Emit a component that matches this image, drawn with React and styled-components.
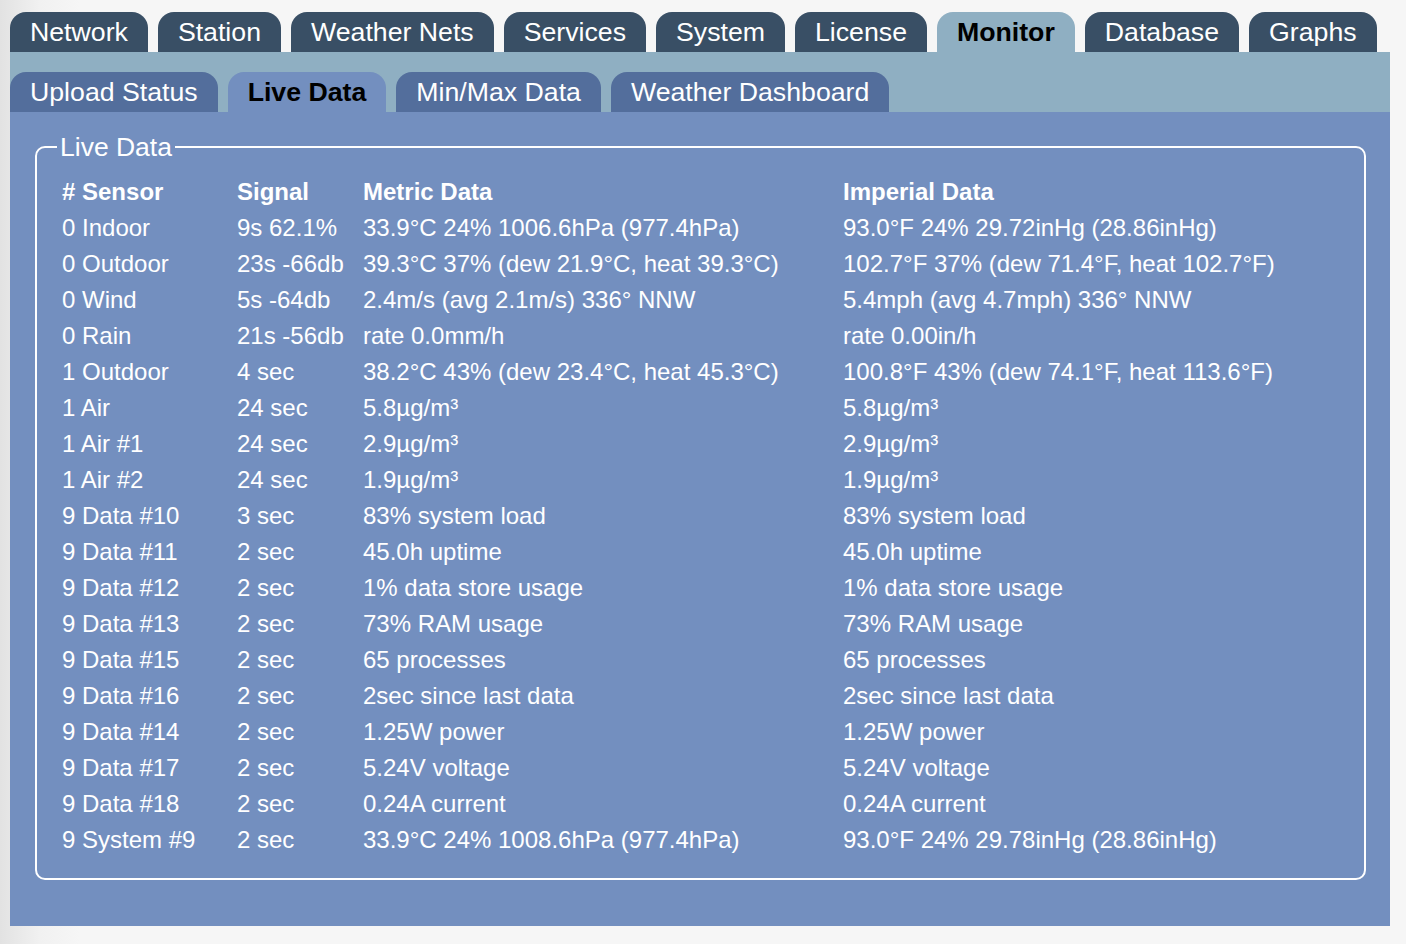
import React from "react";
import styled, { createGlobalStyle } from "styled-components";

const Global = createGlobalStyle`
  html, body { margin: 0; padding: 0; }
  body {
    background: linear-gradient(to right, #e2e2e2 0px, #f1f1f1 40px, #f6f6f6 80px);
    font-family: "Liberation Sans", Arial, sans-serif;
    min-height: 944px;
  }
`;

const Page = styled.div`
  padding: 12px 16px 18px 10px;
  width: 1380px;
`;

const TabBar = styled.div`
  display: flex;
  gap: 10px;
  height: 40px;
  align-items: flex-end;
`;

const Tab = styled.div`
  height: 40px;
  line-height: 40px;
  padding: 0 20px;
  border-radius: 16px 16px 0 0;
  font-size: 26.7px;
  white-space: nowrap;
  background: ${(p) => (p.$active ? "#8fafc2" : "#394f65")};
  color: ${(p) => (p.$active ? "#000" : "#fff")};
  font-weight: ${(p) => (p.$active ? "bold" : "normal")};
`;

const SubBar = styled.div`
  background: #8fafc2;
  padding-top: 20px;
  display: flex;
  gap: 10px;
  height: 40px;
`;

const SubTab = styled(Tab)`
  background: ${(p) => (p.$active ? "#738fbf" : "#536e9c")};
`;

const Content = styled.div`
  background: #738fbf;
  padding: 20px 24px 46px 25px;
  height: 748px;
`;

const Fieldset = styled.fieldset`
  margin: 0;
  border: 2px solid #fff;
  border-radius: 10px;
  padding: 0 0 16px 25px;
  height: 100%;
  box-sizing: border-box;
`;

const Legend = styled.legend`
  color: #fff;
  font-size: 26.5px;
  padding: 0 3px;
  margin-left: -5px;
  line-height: 30px;
`;

const Table = styled.table`
  border-collapse: collapse;
  color: #fff;
  font-size: 24px;
  margin-top: 12px;
`;

const Th = styled.th`
  text-align: left;
  font-weight: bold;
  height: 36px;
  padding: 0;
  width: ${(p) => p.$w}px;
`;

const Td = styled.td`
  height: 36px;
  padding: 0;
  white-space: nowrap;
`;

const topTabs = ["Network", "Station", "Weather Nets", "Services", "System", "License", "Monitor", "Database", "Graphs"];
const subTabs = ["Upload Status", "Live Data", "Min/Max Data", "Weather Dashboard"];

const rows = [
  ["0 Indoor", "9s 62.1%", "33.9°C 24% 1006.6hPa (977.4hPa)", "93.0°F 24% 29.72inHg (28.86inHg)"],
  ["0 Outdoor", "23s -66db", "39.3°C 37% (dew 21.9°C, heat 39.3°C)", "102.7°F 37% (dew 71.4°F, heat 102.7°F)"],
  ["0 Wind", "5s -64db", "2.4m/s (avg 2.1m/s) 336° NNW", "5.4mph (avg 4.7mph) 336° NNW"],
  ["0 Rain", "21s -56db", "rate 0.0mm/h", "rate 0.00in/h"],
  ["1 Outdoor", "4 sec", "38.2°C 43% (dew 23.4°C, heat 45.3°C)", "100.8°F 43% (dew 74.1°F, heat 113.6°F)"],
  ["1 Air", "24 sec", "5.8µg/m³", "5.8µg/m³"],
  ["1 Air #1", "24 sec", "2.9µg/m³", "2.9µg/m³"],
  ["1 Air #2", "24 sec", "1.9µg/m³", "1.9µg/m³"],
  ["9 Data #10", "3 sec", "83% system load", "83% system load"],
  ["9 Data #11", "2 sec", "45.0h uptime", "45.0h uptime"],
  ["9 Data #12", "2 sec", "1% data store usage", "1% data store usage"],
  ["9 Data #13", "2 sec", "73% RAM usage", "73% RAM usage"],
  ["9 Data #15", "2 sec", "65 processes", "65 processes"],
  ["9 Data #16", "2 sec", "2sec since last data", "2sec since last data"],
  ["9 Data #14", "2 sec", "1.25W power", "1.25W power"],
  ["9 Data #17", "2 sec", "5.24V voltage", "5.24V voltage"],
  ["9 Data #18", "2 sec", "0.24A current", "0.24A current"],
  ["9 System #9", "2 sec", "33.9°C 24% 1008.6hPa (977.4hPa)", "93.0°F 24% 29.78inHg (28.86inHg)"],
];

export default function App() {
  return (
    <>
      <Global />
      <Page>
        <TabBar>
          {topTabs.map((t) => (
            <Tab key={t} $active={t === "Monitor"}>{t}</Tab>
          ))}
        </TabBar>
        <SubBar>
          {subTabs.map((t) => (
            <SubTab key={t} $active={t === "Live Data"}>{t}</SubTab>
          ))}
        </SubBar>
        <Content>
          <Fieldset>
            <Legend>Live Data</Legend>
            <Table>
              <thead>
                <tr>
                  <Th $w={175}># Sensor</Th>
                  <Th $w={126}>Signal</Th>
                  <Th $w={480}>Metric Data</Th>
                  <Th>Imperial Data</Th>
                </tr>
              </thead>
              <tbody>
                {rows.map((r, i) => (
                  <tr key={i}>
                    {r.map((c, j) => (
                      <Td key={j}>{c}</Td>
                    ))}
                  </tr>
                ))}
              </tbody>
            </Table>
          </Fieldset>
        </Content>
      </Page>
    </>
  );
}
